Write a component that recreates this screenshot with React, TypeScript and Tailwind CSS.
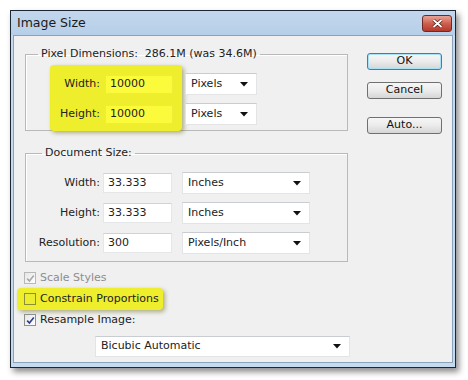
import React from 'react';

const font = { fontFamily: '"DejaVu Sans", Verdana, sans-serif' };

function Arrow() {
  return (
    <svg width="8" height="5" viewBox="0 0 8 5" className="shrink-0">
      <path d="M0 0 L8 0 L4 4.5 Z" fill="#111" />
    </svg>
  );
}

function Select({ value, className }: { value: string; className: string }) {
  return (
    <div
      className={`flex items-center justify-between bg-white border border-[#e2e4e6] border-t-[#c9ccd0] pl-[5px] pr-[8px] text-[11px] text-[#222] ${className}`}
    >
      <span>{value}</span>
      <Arrow />
    </div>
  );
}

function Field({ value, yellow, className }: { value: string; yellow?: boolean; className: string }) {
  return (
    <div
      className={`flex items-center pl-[4px] text-[11px] text-[#222] border ${
        yellow ? 'bg-[#fbfb3c] border-[#eeee3a]' : 'bg-white border-[#e4e6e8] border-t-[#cfd2d6]'
      } ${className}`}
    >
      {value}
    </div>
  );
}

function Check({ state }: { state: 'on' | 'off' | 'disabled' }) {
  const border = state === 'disabled' ? 'border-[#b8b8b8]' : state === 'off' ? 'border-[#8c8c3a]' : 'border-[#8e8f8f]';
  const bg = state === 'off' ? 'bg-[#eded30]' : 'bg-gradient-to-br from-[#e6e6e6] to-white';
  return (
    <div className={`w-[12px] h-[12px] border ${border} ${bg} flex items-center justify-center shrink-0`}>
      {state !== 'off' && (
        <svg width="9" height="9" viewBox="0 0 9 9">
          <path
            d="M1.2 4.6 L3.4 7 L7.8 1.4"
            fill="none"
            stroke={state === 'disabled' ? '#a8a8a8' : '#2b3f8f'}
            strokeWidth="1.6"
          />
        </svg>
      )}
    </div>
  );
}

function Button({ label, primary }: { label: string; primary?: boolean }) {
  return (
    <div
      className={`h-[17px] w-[75px] flex items-center justify-center rounded-[3px] border text-[11px] text-[#111] bg-gradient-to-b from-[#f6f6f6] via-[#ebebeb] to-[#d6d6d6] ${
        primary ? 'border-[#3c7fb1] shadow-[inset_0_0_0_1px_#a8e0f6]' : 'border-[#707070]'
      }`}
    >
      {label}
    </div>
  );
}

export default function App() {
  return (
    <div className="w-[468px] h-[380px] bg-white pt-[10px] pl-[10px]" style={font}>
      <div className="w-[446px] h-[358px] border border-[#1d2733] bg-[#c6daef] flex flex-col shadow-[3px_4px_6px_rgba(0,0,0,0.45)]">
        {/* Title bar */}
        <div className="h-[24px] flex items-start justify-between bg-gradient-to-b from-[#c2d7ed] to-[#b6cfe8] pl-[6px] pr-[3px]">
          <span className="text-[12.5px] leading-[24px] text-[#1a1a1a]">Image Size</span>
          <div className="mt-[4px] w-[30px] h-[17px] rounded-[3px] border border-[#6e2a22] bg-gradient-to-b from-[#e6a497] via-[#cf5f4f] to-[#b23a2c] flex items-center justify-center">
            <svg width="11" height="9" viewBox="0 0 11 9">
              <path d="M1.5 1 L9.5 8 M9.5 1 L1.5 8" stroke="#4a1a14" strokeWidth="3.2" />
              <path d="M1.5 1 L9.5 8 M9.5 1 L1.5 8" stroke="#fff" strokeWidth="1.8" />
            </svg>
          </div>
        </div>

        {/* Client area */}
        <div className="mx-[2px] mb-[4px] flex-1 border border-[#8aa2ba] bg-[#f0f0f0] flex">
          <div className="w-[336px] pl-[11px] pt-[11px] flex flex-col">
            <fieldset className="w-[323px] h-[84px] border border-[#b9b9b9] shadow-[inset_1px_1px_0_#fff]">
              <legend className="ml-[12px] px-[3px] text-[11px] leading-[14px] text-[#222]">
                Pixel Dimensions:&nbsp; 286.1M (was 34.6M)
              </legend>
              <div className="flex items-start mt-[4px]">
                <div className="ml-[24px] w-[132px] h-[66px] rounded-[4px] bg-[#eeee2c] shadow-[2px_2px_4px_rgba(90,90,0,0.45)] pt-[8px] flex flex-col gap-[8px]">
                  <div className="h-[22px] flex items-center">
                    <span className="w-[50px] text-right text-[11px] text-[#222]">Width:</span>
                    <Field value="10000" yellow className="ml-[5px] w-[68px] h-[19px]" />
                  </div>
                  <div className="h-[22px] flex items-center">
                    <span className="w-[50px] text-right text-[11px] text-[#222]">Height:</span>
                    <Field value="10000" yellow className="ml-[5px] w-[68px] h-[19px]" />
                  </div>
                </div>
                <div className="ml-[3px] pt-[8px] flex flex-col gap-[8px]">
                  <Select value="Pixels" className="w-[72px] h-[22px] pl-[3px]" />
                  <Select value="Pixels" className="w-[72px] h-[22px] pl-[3px]" />
                </div>
              </div>
            </fieldset>

            <fieldset className="mt-[15px] w-[323px] h-[116px] border border-[#b9b9b9] shadow-[inset_1px_1px_0_#fff]">
              <legend className="ml-[16px] px-[3px] text-[11px] leading-[14px] text-[#222]">Document Size:</legend>
              <div className="mt-[12px] flex flex-col gap-[8px]">
                {[
                  ['Width:', '33.333', 'Inches'],
                  ['Height:', '33.333', 'Inches'],
                  ['Resolution:', '300', 'Pixels/Inch'],
                ].map(([label, val, unit]) => (
                  <div key={label} className="h-[22px] flex items-center">
                    <span className="w-[74px] text-right text-[11px] text-[#222]">{label}</span>
                    <Field value={val} className="ml-[3px] w-[69px] h-[20px]" />
                    <Select value={unit} className="ml-[10px] w-[128px] h-[22px]" />
                  </div>
                ))}
              </div>
            </fieldset>

            <div className="mt-[6px] -ml-[1px] flex flex-col">
              <div className="h-[20px] flex items-center gap-[4px]">
                <Check state="disabled" />
                <span className="text-[11px] text-[#8d8d8d]">Scale Styles</span>
              </div>
              <div className="self-start -ml-[7px] pl-[7px] w-[146px] h-[22px] rounded-[4px] bg-[#eeee2c] shadow-[2px_2px_4px_rgba(90,90,0,0.45)] flex items-center gap-[4px]">
                <Check state="off" />
                <span className="text-[11px] text-[#222]">Constrain Proportions</span>
              </div>
              <div className="h-[20px] flex items-center gap-[4px]">
                <Check state="on" />
                <span className="text-[11px] text-[#222]">Resample Image:</span>
              </div>
              <Select value="Bicubic Automatic" className="mt-[6px] ml-[71px] w-[255px] h-[21px]" />
            </div>
          </div>

          <div className="ml-[17px] pt-[17px] flex flex-col">
            <Button label="OK" primary />
            <div className="mt-[12px]">
              <Button label="Cancel" />
            </div>
            <div className="mt-[18px]">
              <Button label="Auto..." />
            </div>
          </div>
        </div>
      </div>
    </div>
  );
}
